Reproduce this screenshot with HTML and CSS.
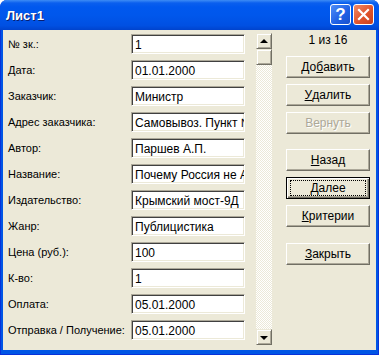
FILE: index.html
```html
<!DOCTYPE html>
<html lang="ru">
<head>
  <meta charset="UTF-8" />
  <title>Лист1</title>
  <link rel="stylesheet" href="styles.css">
</head>
<body>

  <div class="window">
    <!-- Title bar -->
    <div class="titlebar">
      <span class="title">Лист1</span>
      <div class="caption-btns">
        <div class="cap help">?</div>
        <div class="cap close">
          <svg width="13" height="13" viewBox="0 0 13 13">
            <path d="M2 2 L11 11 M11 2 L2 11" stroke="#fff" stroke-width="2.2" stroke-linecap="square"/>
          </svg>
        </div>
      </div>
    </div>

    <div class="dialog">
      <!-- Fields -->
      <div class="fields">
        <label>№ зк.:</label><div class="box">1</div>
        <label>Дата:</label><div class="box">01.01.2000</div>
        <label>Заказчик:</label><div class="box">Министр</div>
        <label>Адрес заказчика:</label><div class="box">Самовывоз. Пункт №6</div>
        <label>Автор:</label><div class="box">Паршев А.П.</div>
        <label>Название:</label><div class="box">Почему Россия не Америка</div>
        <label>Издательство:</label><div class="box">Крымский мост-9Д</div>
        <label>Жанр:</label><div class="box">Публицистика</div>
        <label>Цена (руб.):</label><div class="box">100</div>
        <label>К-во:</label><div class="box">1</div>
        <label>Оплата:</label><div class="box">05.01.2000</div>
        <label>Отправка / Получение:</label><div class="box">05.01.2000</div>
      </div>

      <!-- Scrollbar -->
      <div class="scrollbar">
        <div class="sb-btn"><span class="arrow up"></span></div>
        <div class="sb-btn thumb"></div>
        <div class="sb-track"></div>
        <div class="sb-btn"><span class="arrow down"></span></div>
      </div>

      <!-- Buttons -->
      <div class="actions">
        <div class="counter">1 из 16</div>
        <div class="btn">До<u>б</u>авить</div>
        <div class="btn"><u>У</u>далить</div>
        <div class="btn disabled">Вернуть</div>
        <div class="btn group"><u>Н</u>азад</div>
        <div class="btn focused"><span class="focus-rect"><u>Д</u>алее</span></div>
        <div class="btn"><u>К</u>ритерии</div>
        <div class="btn group"><u>З</u>акрыть</div>
      </div>
    </div>
  </div>

</body>
</html>
```

FILE: styles.css
```css
body {
  margin: 0;
  background: #fff;
  font-family: 'Liberation Sans', Arial, sans-serif;
}

.window {
  width: 379px;
  height: 355px;
  box-sizing: border-box;
  display: flex;
  flex-direction: column;
  background: #0055e5;
  border-radius: 7px 7px 0 0;
  border: 1px solid #0831d9;
  border-top: none;
}

.titlebar {
  height: 30px;
  flex: 0 0 30px;
  display: flex;
  align-items: center;
  justify-content: space-between;
  margin: 0 -1px;
  padding: 0 5px 0 6px;
  border-radius: 7px 7px 0 0;
  background: linear-gradient(#3d8cf5 0, #0a5fee 3px, #0058ee 7px, #0057ec 50%, #0050e2 85%, #0043cd 100%);
}

.title {
  color: #fff;
  font-weight: bold;
  font-size: 13px;
  text-shadow: 1px 1px #0a1e6e;
  margin-top: 1px;
}

.caption-btns {
  display: flex;
  gap: 2px;
  margin-top: -1px;
}

.cap {
  width: 19px;
  height: 19px;
  border: 1px solid #fff;
  border-radius: 3px;
  display: flex;
  align-items: center;
  justify-content: center;
}

.help {
  background: linear-gradient(135deg, #4f8ef7, #1e5fe4 60%, #1a50cc);
  color: #fff;
  font-weight: bold;
  font-size: 17px;
}

.close {
  background: linear-gradient(135deg, #f08a68, #e0542c 55%, #c9401c);
}

.dialog {
  flex: 1;
  display: flex;
  margin: 0 2px 4px 2px;
  padding: 3px 0 0 5px;
  background: #ece9d8;
  font-size: 11px;
  color: #000;
}

.fields {
  display: grid;
  grid-template-columns: 123px 114px;
  grid-auto-rows: 20px;
  row-gap: 6px;
  margin-top: 1px;
  align-items: center;
}

.fields label {
  white-space: nowrap;
}

.box {
  height: 20px;
  box-sizing: border-box;
  background: #fff;
  border: 1px solid;
  border-color: #aca899 #fff #fff #aca899;
  box-shadow: inset 1px 1px #404040, inset -1px -1px #ece9d8;
  padding: 3px 0 0 3px;
  white-space: nowrap;
  overflow: hidden;
  font-size: 12px;
}

.scrollbar {
  width: 16px;
  height: 312px;
  margin-left: 11px;
  display: flex;
  flex-direction: column;
}

.sb-btn {
  height: 16px;
  flex: 0 0 16px;
  box-sizing: border-box;
  background: #ece9d8;
  border: 1px solid;
  border-color: #ece9d8 #716f64 #716f64 #ece9d8;
  box-shadow: inset 1px 1px #fff, inset -1px -1px #aca899;
  display: flex;
  align-items: center;
  justify-content: center;
}

.sb-track {
  flex: 1;
  background-color: #fff;
  background-image: conic-gradient(#ece9d8 25%, #fff 0 50%, #ece9d8 0 75%, #fff 0);
  background-size: 2px 2px;
}

.arrow {
  width: 0;
  height: 0;
  border-left: 4px solid transparent;
  border-right: 4px solid transparent;
}

.arrow.up {
  border-bottom: 4px solid #000;
  margin-top: -1px;
}

.arrow.down {
  border-top: 4px solid #000;
  margin-top: 1px;
}

.actions {
  width: 84px;
  margin-left: 14px;
  display: flex;
  flex-direction: column;
}

.counter {
  height: 14px;
  line-height: 14px;
  text-align: center;
  font-size: 12px;
  margin-bottom: 9px;
}

.btn {
  height: 22px;
  box-sizing: border-box;
  margin-bottom: 6px;
  background: #ece9d8;
  border: 1px solid;
  border-color: #fff #716f64 #716f64 #fff;
  box-shadow: inset -1px -1px #aca899;
  display: flex;
  align-items: center;
  justify-content: center;
  font-size: 12px;
}

.btn.group {
  margin-top: 9px;
}

.btn.group:last-child {
  margin-top: 10px;
}

.btn.disabled {
  color: #aca899;
  text-shadow: 1px 1px #fff;
}

.btn.focused {
  border: 1px solid #000;
  box-shadow: inset 1px 1px #fff, inset -1px -1px #716f64, inset -2px -2px #aca899;
}

.focus-rect {
  flex: 1;
  align-self: stretch;
  margin: 3px 4px;
  outline: 1px dotted #000;
  display: flex;
  align-items: center;
  justify-content: center;
}
```
